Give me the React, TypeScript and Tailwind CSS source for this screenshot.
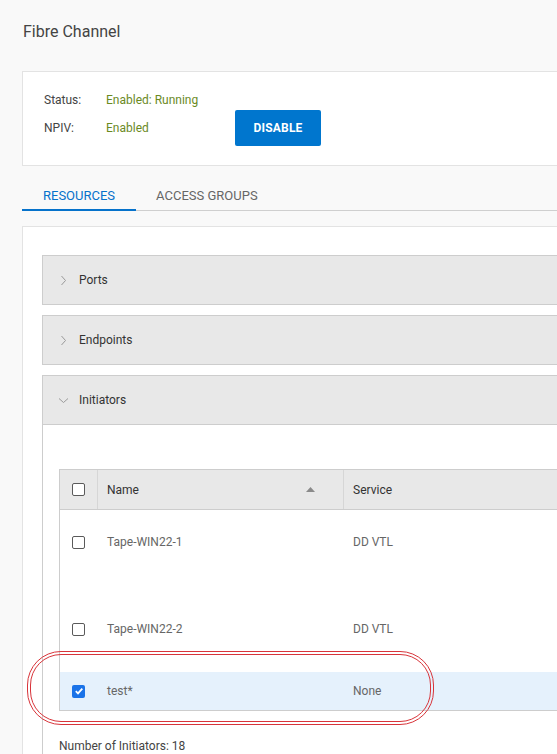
import React from "react";

function Chevron({ down }: { down?: boolean }) {
  return (
    <svg width="11" height="11" viewBox="0 0 11 11" className="shrink-0">
      {down ? (
        <path d="M1 3.5 L5.5 7.5 L10 3.5" fill="none" stroke="#9a9a9a" strokeWidth="1" />
      ) : (
        <path d="M3.5 1 L7.5 5.5 L3.5 10" fill="none" stroke="#9a9a9a" strokeWidth="1" />
      )}
    </svg>
  );
}

function Box({ checked }: { checked?: boolean }) {
  if (checked) {
    return (
      <div className="w-[13px] h-[13px] rounded-[2px] bg-[#1a73e8] flex items-center justify-center">
        <svg width="10" height="10" viewBox="0 0 10 10">
          <path d="M1.8 5.2 L4 7.4 L8.3 2.6" fill="none" stroke="white" strokeWidth="1.8" />
        </svg>
      </div>
    );
  }
  return <div className="w-[13px] h-[13px] rounded-[2px] border border-[#5a5a5a] bg-white" />;
}

function AccHeader({ label, open }: { label: string; open?: boolean }) {
  return (
    <div className="h-[50px] bg-[#e8e8e8] border border-[#cdcdcd] flex items-center pl-[15px] gap-[10px] text-[12px] text-[#333]">
      <Chevron down={open} />
      <span>{label}</span>
    </div>
  );
}

export default function App() {
  return (
    <div
      className="relative w-[557px] h-[754px] overflow-hidden bg-[#f9f9f9] text-[#444]"
      style={{ fontFamily: "Roboto, 'Liberation Sans', sans-serif" }}
    >
      <div className="pl-[23px] pt-[20px] text-[16px] leading-[24px] text-[#444]">Fibre Channel</div>

      <div className="ml-[22px] mt-[27px] w-[700px] h-[95px] bg-white border border-[#e3e3e3] pt-[18px] pl-[21px] text-[12px]">
        <div className="flex items-center h-[20px]">
          <span className="w-[62px] text-[#444]">Status:</span>
          <span className="text-[#6b8a1f]">Enabled: Running</span>
        </div>
        <div className="flex items-center h-[36px]">
          <span className="w-[62px] text-[#444]">NPIV:</span>
          <span className="w-[129px] text-[#6b8a1f]">Enabled</span>
          <button className="w-[86px] h-[36px] bg-[#0076ce] text-white font-bold text-[12px] rounded-[2px] tracking-[0.2px]">
            DISABLE
          </button>
        </div>
      </div>

      <div className="ml-[22px] mt-[15px] w-[700px] flex border-b border-[#cfcfcf] text-[13px] leading-[16px]">
        <div className="px-[21px] pt-[7px] pb-[5px] border-b-2 border-[#0672cb] -mb-px text-[#0672cb]">RESOURCES</div>
        <div className="px-[20px] pt-[7px] pb-[5px] text-[#666]">ACCESS GROUPS</div>
      </div>

      <div className="ml-[22px] mt-[15px] w-[700px] h-[600px] bg-white border border-[#e3e3e3] pt-[28px] pl-[19px]">
        <div className="flex flex-col gap-[10px]">
          <AccHeader label="Ports" />
          <AccHeader label="Endpoints" />
          <div>
            <AccHeader label="Initiators" open />
            <div className="border-l border-[#cdcdcd] pt-[44px] pl-[16px] h-[400px]">
              <div className="border border-[#cdcdcd] border-r-0 text-[12px]">
                <div className="flex h-[40px] bg-[#e8e8e8] border-b border-[#cdcdcd] items-center text-[#333]">
                  <div className="w-[38px] h-full flex items-center pl-[12px] border-r border-[#d6d6d6]">
                    <Box />
                  </div>
                  <div className="w-[246px] h-full flex items-center justify-between pl-[9px] pr-[28px] border-r border-[#d6d6d6]">
                    <span>Name</span>
                    <svg width="9" height="5" viewBox="0 0 9 5">
                      <path d="M0 5 L4.5 0 L9 5 Z" fill="#8a8a8a" />
                    </svg>
                  </div>
                  <div className="pl-[9px]">Service</div>
                </div>
                <div className="flex h-[65px] items-start pt-[22px] text-[#666] leading-[20px]">
                  <div className="w-[38px] h-[20px] flex items-center pl-[12px]">
                    <Box />
                  </div>
                  <div className="w-[246px] pl-[9px]">Tape-WIN22-1</div>
                  <div className="pl-[9px]">DD VTL</div>
                </div>
                <div className="flex h-[97px] items-start pt-[44px] text-[#666] leading-[20px]">
                  <div className="w-[38px] h-[20px] flex items-center pl-[12px]">
                    <Box />
                  </div>
                  <div className="w-[246px] pl-[9px]">Tape-WIN22-2</div>
                  <div className="pl-[9px]">DD VTL</div>
                </div>
                <div className="flex h-[38px] items-center bg-[#e5f1fc] text-[#666]">
                  <div className="w-[38px] flex items-center pl-[12px]">
                    <Box checked />
                  </div>
                  <div className="w-[246px] pl-[9px]">test*</div>
                  <div className="pl-[9px]">None</div>
                </div>
              </div>
              <div className="mt-[27px] text-[12px] leading-[16px] text-[#444]">Number of Initiators: 18</div>
            </div>
          </div>
        </div>
      </div>

      <div className="absolute left-[27px] top-[651px] w-[407px] h-[74px] rounded-[34px] border-[4px] border-double border-[#d8343a] pointer-events-none" />
    </div>
  );
}
